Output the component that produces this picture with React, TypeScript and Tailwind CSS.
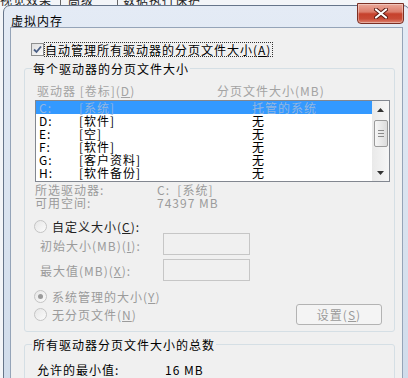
import React from 'react';

const drives = [
  ['C:', '[系统]', '托管的系统'],
  ['D:', '[软件]', '无'],
  ['E:', '[空]', '无'],
  ['F:', '[软件]', '无'],
  ['G:', '[客户资料]', '无'],
  ['H:', '[软件备份]', '无'],
];

const U = ({ children }: { children: React.ReactNode }) => (
  <span className="underline underline-offset-[1px]">{children}</span>
);

const Radio = ({ checked = false }: { checked?: boolean }) => (
  <span className="flex h-[13px] w-[13px] items-center justify-center rounded-full border border-[#c4c4c4] bg-[linear-gradient(135deg,#e6e6e6,#fbfbfb)]">
    {checked && <span className="h-[5px] w-[5px] rounded-full bg-[#9a9a9a]" />}
  </span>
);

const App = () => {
  return (
    <div className="relative h-[378px] w-[408px] overflow-hidden bg-[#f3f5f8] font-['Noto_Sans_CJK_SC',sans-serif] text-[12px] leading-[13px] tracking-[1px] text-black">
      {/* window behind the dialog */}
      <div className="h-[6px] overflow-hidden">
        <div className="-mt-[7px] flex items-stretch text-[#222]">
          <span className="w-[60px]">视觉效果</span>
          <span className="w-px bg-[#666]" />
          <span className="w-[56px] pl-[7px]">高级</span>
          <span className="w-px bg-[#666]" />
          <span className="pl-[5px]">数据执行保护</span>
        </div>
      </div>

      {/* dialog window */}
      <div className="absolute left-[3px] top-[5px] flex h-[400px] w-[407px] flex-col rounded-t-[7px] border border-[#66758a] bg-[linear-gradient(180deg,#e4ebf5,#cfdbea)]">
        <div className="flex h-[27px] items-start justify-between pl-[7px]">
          <span className="pt-[8px]">虚拟内存</span>
          <div className="-mt-[3px] mr-[5px] flex h-[21px] w-[47px] items-center justify-center rounded-b-[4px] border border-[#7b2f24] bg-[linear-gradient(180deg,#eaa89a_0%,#dc7d6b_42%,#c6412c_52%,#c94b36_78%,#de8572_100%)] shadow-[inset_0_0_0_1px_rgba(255,255,255,0.35)]">
            <svg width="14" height="11" viewBox="0 0 14 11">
              <path d="M2 1.5 L12 9.5 M12 1.5 L2 9.5" stroke="#5b1a12" strokeWidth="4" strokeLinecap="round" />
              <path d="M2 1.5 L12 9.5 M12 1.5 L2 9.5" stroke="#ffffff" strokeWidth="2.2" strokeLinecap="round" />
            </svg>
          </div>
        </div>

        <div className="mx-[6px] flex flex-1 flex-col border border-[#95a4b8] bg-[#f0f0f0]">
          {/* auto manage checkbox */}
          <div className="ml-[20px] mt-[14px] flex h-[15px] items-center">
            <span className="flex h-[13px] w-[13px] items-center justify-center border border-[#8e8f8f] bg-[linear-gradient(135deg,#dedede,#fbfbfb)]">
              <svg width="9" height="9" viewBox="0 0 9 9">
                <path d="M1 4.5 L3.5 7 L8 1.5" fill="none" stroke="#4a5f86" strokeWidth="1.8" />
              </svg>
            </span>
            <span className="border border-dotted border-[#333] pr-[1px]">
              自动管理所有驱动器的分页文件大小(<U>A</U>)
            </span>
          </div>

          {/* per-drive group */}
          <fieldset className="ml-[13px] mr-[7px] mt-[5px] rounded-[3px] border border-[#d5dfe5] p-0">
            <legend className="ml-[7px] px-[1px]">每个驱动器的分页文件大小</legend>
            <div className="flex flex-col pb-[6px] pl-[10px] pr-[4px]">
              <div className="mt-[9px] flex h-[13px] pl-[2px] text-[#a3a3a3]">
                <span className="w-[180px]">
                  驱动器 [卷标](<U>D</U>)
                </span>
                <span>分页文件大小(MB)</span>
              </div>

              <div className="mt-[3px] flex h-[82px] border border-[#828790] bg-white">
                <div className="flex flex-1 flex-col">
                  {drives.map(([d, label, size], i) => (
                    <div
                      key={d}
                      className={
                        i === 0
                          ? 'flex h-[13px] bg-[#3399ff] pl-[3px] text-[#93b6df]'
                          : 'flex h-[13px] pl-[3px]'
                      }
                    >
                      <span className="w-[40px]">{d}</span>
                      <span className="w-[173px]">{label}</span>
                      <span>{size}</span>
                    </div>
                  ))}
                </div>
                <div className="flex w-[17px] flex-col items-center bg-[linear-gradient(90deg,#e9e9e9,#f6f6f6)]">
                  <div className="flex h-[17px] items-center justify-center">
                    <svg width="7" height="4" viewBox="0 0 7 4">
                      <path d="M0 4 L3.5 0 L7 4 Z" fill="#333" />
                    </svg>
                  </div>
                  <div className="mt-[2px] flex h-[27px] w-[14px] flex-col items-center justify-center gap-[2px] rounded-[2px] border border-[#9a9a9a] bg-[linear-gradient(90deg,#f6f6f6,#dcdcdc)]">
                    <span className="h-px w-[6px] bg-[#8a8a8a]" />
                    <span className="h-px w-[6px] bg-[#8a8a8a]" />
                    <span className="h-px w-[6px] bg-[#8a8a8a]" />
                  </div>
                  <div className="mt-auto flex h-[17px] items-center justify-center">
                    <svg width="7" height="4" viewBox="0 0 7 4">
                      <path d="M0 0 L7 0 L3.5 4 Z" fill="#333" />
                    </svg>
                  </div>
                </div>
              </div>

              <div className="mt-[1px] flex h-[13px] text-[#9b9b9b]">
                <span className="w-[122px]">所选驱动器:</span>
                <span>C:&nbsp;&nbsp;[系统]</span>
              </div>
              <div className="flex h-[13px] text-[#9b9b9b]">
                <span className="w-[122px]">可用空间:</span>
                <span>74397 MB</span>
              </div>

              <div className="-ml-[1px] mt-[11px] flex h-[13px] items-center gap-[5px] text-[#222]">
                <Radio />
                <span>
                  自定义大小(<U>C</U>):
                </span>
              </div>

              <div className="flex h-[22px] items-center pl-[5px] text-[#9b9b9b]">
                <span className="w-[123px] pt-[3px]">
                  初始大小(MB)(<U>I</U>):
                </span>
                <span className="h-[22px] w-[87px] border border-[#c6c6c6] bg-[#f0f0f0]" />
              </div>
              <div className="mt-[4px] flex h-[22px] items-center pl-[5px] text-[#9b9b9b]">
                <span className="w-[123px]">
                  最大值(MB)(<U>X</U>):
                </span>
                <span className="h-[22px] w-[87px] border border-[#c6c6c6] bg-[#f0f0f0]" />
              </div>

              <div className="-ml-[1px] mt-[9px] flex h-[13px] items-center gap-[5px] text-[#9b9b9b]">
                <Radio checked />
                <span>
                  系统管理的大小(<U>Y</U>)
                </span>
              </div>
              <div className="-ml-[1px] mt-[1px] flex h-[21px] items-center gap-[5px] text-[#9b9b9b]">
                <Radio />
                <span>
                  无分页文件(<U>N</U>)
                </span>
                <span className="ml-auto mr-[8px] flex h-[21px] w-[86px] items-center justify-center rounded-[3px] border border-[#b3b3b3] bg-[#f4f4f4]">
                  设置(<U>S</U>)
                </span>
              </div>
            </div>
          </fieldset>

          {/* totals group */}
          <fieldset className="ml-[13px] mr-[7px] mt-[6px] rounded-[3px] border border-[#d5dfe5] p-0">
            <legend className="ml-[7px] px-[1px]">所有驱动器分页文件大小的总数</legend>
            <div className="mt-[12px] flex h-[40px] pl-[12px]">
              <span className="w-[128px]">允许的最小值:</span>
              <span>16 MB</span>
            </div>
          </fieldset>
        </div>
      </div>
    </div>
  );
};

export default App;
